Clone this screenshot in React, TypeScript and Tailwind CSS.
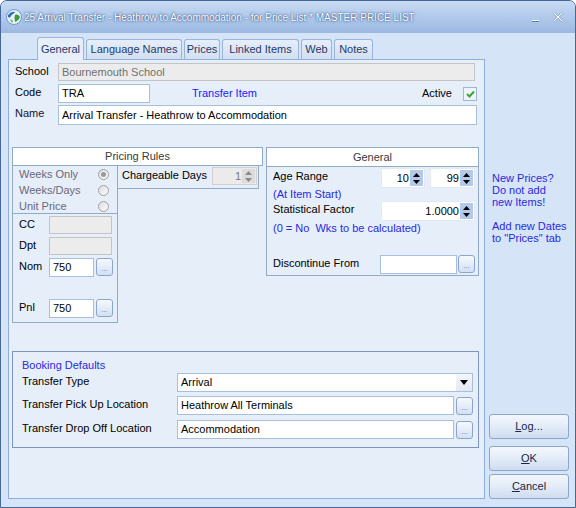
import React from 'react';

function Globe() {
  return (
    <svg width="16" height="16" viewBox="0 0 16 16">
      <circle cx="8" cy="8" r="7.5" fill="#e9f1fb" stroke="#5d86bf" strokeWidth="0.8" />
      <path d="M2 6 C4 3 7 2 9 3 C8 5 6 5 5 7 C4 9 3 9 2 8 Z" fill="#2f6fc0" />
      <path d="M9 6 C11 5 13 6 14 8 C13 11 11 12 9 13 C9 11 8 9 9 6 Z" fill="#3e9a3a" />
      <path d="M4 11 C5 10 7 11 7 13 C6 14 5 13 4 11 Z" fill="#7fb657" />
    </svg>
  );
}

function TextBox({ value = '', className = '', disabled = false }: { value?: string; className?: string; disabled?: boolean }) {
  return (
    <div
      className={`flex items-center px-[3px] border whitespace-nowrap overflow-hidden ${
        disabled ? 'bg-[#ececec] border-[#c4c4c4] text-[#707070]' : 'bg-white border-[#a7bedc] text-black'
      } ${className}`}
    >
      {value}
    </div>
  );
}

function Dots({ className = '' }: { className?: string }) {
  return (
    <div
      className={`flex items-end justify-center pb-[3px] rounded-[3px] border border-[#8aa6cf] bg-gradient-to-b from-[#f6f9fd] to-[#d2e0f2] text-[#3d6cc0] text-[7px] leading-none ${className}`}
    >
      ...
    </div>
  );
}

function SpinArrows({ disabled = false }: { disabled?: boolean }) {
  const c = disabled ? '#8a8a8a' : '#000';
  return (
    <div
      className={`w-[13px] h-full flex flex-col items-center justify-center gap-[3px] ${
        disabled ? 'bg-[#dcdcdc]' : 'bg-[#b3c9e8]'
      }`}
    >
      <svg width="7" height="4" viewBox="0 0 7 4">
        <path d="M0 4 L3.5 0 L7 4 Z" fill={c} />
      </svg>
      <svg width="7" height="4" viewBox="0 0 7 4">
        <path d="M0 0 L3.5 4 L7 0 Z" fill={c} />
      </svg>
    </div>
  );
}

function Spinner({ value, className = '', disabled = false }: { value: string; className?: string; disabled?: boolean }) {
  return (
    <div
      className={`flex items-stretch border ${
        disabled ? 'bg-[#ebebeb] border-[#d0d0d0] text-[#777]' : 'bg-white border-[#e2e9f3] text-black'
      } ${className}`}
    >
      <div className="flex-1 flex items-center justify-end pr-[1px]">{value}</div>
      <div className="py-[1px] pr-[1px]">
        <SpinArrows disabled={disabled} />
      </div>
    </div>
  );
}

function Radio({ checked = false }: { checked?: boolean }) {
  return (
    <div className="w-[11px] h-[11px] rounded-full border border-[#a0a0a0] bg-gradient-to-br from-[#e0e0e0] to-[#fafafa] flex items-center justify-center">
      {checked && <div className="w-[5px] h-[5px] rounded-full bg-[#9a9a9a]" />}
    </div>
  );
}

function Label({ children, className = '' }: { children: React.ReactNode; className?: string }) {
  return <div className={`self-start mt-[2px] leading-[13px] whitespace-nowrap ${className}`}>{children}</div>;
}

function WinButton({ children }: { children: React.ReactNode }) {
  return (
    <div className="w-[80px] h-[25px] flex items-center justify-center rounded-[3px] border border-[#8da6cb] bg-gradient-to-b from-[#f3f7fc] via-[#e3ecf8] to-[#cfdcef] text-[#15284a]">
      {children}
    </div>
  );
}

const tabs = [
  { name: 'General', w: 'w-[47px]' },
  { name: 'Language Names', w: 'w-[96px]' },
  { name: 'Prices', w: 'w-[36px]' },
  { name: 'Linked Items', w: 'w-[77px]' },
  { name: 'Web', w: 'w-[31px]' },
  { name: 'Notes', w: 'w-[39px]' },
];

export default function App() {
  return (
    <div className="w-[576px] h-[508px] flex flex-col bg-[#d5e4f7] border border-[#46679a] rounded-t-[7px] overflow-hidden font-['Liberation_Sans',Arial,sans-serif] text-[11px] text-black">
      {/* title bar */}
      <div className="h-[32px] shrink-0 flex items-center bg-gradient-to-b from-[#c9dbf2] via-[#b1c9eb] to-[#9cb9e2] pl-[5px] pr-[12px]">
        <Globe />
        <span className="ml-[2px] text-[10px] text-white [text-shadow:0_0_3px_#2c4f86,0_0_1px_#2c4f86] whitespace-nowrap">
          25 Arrival Transfer - Heathrow to Accommodation - for Price List * MASTER PRICE LIST
        </span>
        <div className="flex-1" />
        <div className="mt-[8px] w-[7px] h-[2px] bg-white border-b border-[#5a7cae]" />
        <svg className="ml-[14px]" width="10" height="10" viewBox="0 0 10 10">
          <path d="M1 1 L9 9 M9 1 L1 9" stroke="#5a7cae" strokeWidth="2.2" />
          <path d="M1 1 L9 9 M9 1 L1 9" stroke="#ffffff" strokeWidth="1.2" />
        </svg>
      </div>

      <div className="flex-1 flex">
        {/* left: tabs + page */}
        <div className="w-[477px] ml-[7px] flex flex-col">
          <div className="mt-[4px] h-[22px] flex items-end pl-[29px] gap-[2px]">
            {tabs.map((t, i) =>
              i === 0 ? (
                <div
                  key={t.name}
                  className={`${t.w} h-[23px] -mb-px relative z-10 flex items-center justify-center rounded-t-[3px] border border-b-0 border-[#9ab5da] bg-[#e5eef9] text-[#1f3a68]`}
                >
                  {t.name}
                </div>
              ) : (
                <div
                  key={t.name}
                  className={`${t.w} h-[20px] flex items-center justify-center rounded-t-[3px] border border-b-0 border-[#9ab5da] bg-gradient-to-b from-[#e6eef9] to-[#d3e0f1] text-[#1f3a68] whitespace-nowrap`}
                >
                  {t.name}
                </div>
              )
            )}
          </div>

          <div className="h-[440px] border border-[#8eaedb] bg-[#e5eef9] pl-[3px]">
            {/* School */}
            <div className="mt-[3px] pl-[3px] h-[18px] flex items-center">
              <Label className="w-[43px]">School</Label>
              <TextBox disabled value="Bournemouth School" className="w-[417px] h-[18px]" />
            </div>
            {/* Code */}
            <div className="mt-[3px] pl-[3px] pr-[7px] h-[19px] flex items-center">
              <Label className="w-[43px]">Code</Label>
              <TextBox value="TRA" className="w-[92px] h-[19px]" />
              <span className="ml-[42px] text-[#1a1aff]">Transfer Item</span>
              <div className="flex-1" />
              <span>Active</span>
              <div className="ml-[11px] w-[14px] h-[14px] border border-[#9fb6d6] bg-[#eef3fa] flex items-center justify-center">
                <svg width="9" height="8" viewBox="0 0 9 8">
                  <path d="M1 4 L3.5 6.5 L8 1.5" stroke="#3aa53a" strokeWidth="2" fill="none" />
                </svg>
              </div>
            </div>
            {/* Name */}
            <div className="mt-[2px] pl-[3px] h-[20px] flex items-center">
              <Label className="w-[43px] text-[#1c1030]">Name</Label>
              <TextBox value="Arrival Transfer - Heathrow to Accommodation" className="w-[419px] h-[20px]" />
            </div>

            {/* middle */}
            <div className="mt-[22px] flex items-start">
              {/* Pricing rules */}
              <div className="w-[251px] flex flex-col">
                <div className="h-[19px] border border-[#93a9c8] bg-white flex items-center justify-center text-[#3a3a3a]">
                  Pricing Rules
                </div>
                <div className="flex items-start">
                  <div className="w-[106px] flex flex-col">
                    <div className="h-[47px] border-x border-[#93a9c8] text-[#6b6878]">
                      {['Weeks Only', 'Weeks/Days', 'Unit Price'].map((r, i) => (
                        <div key={r} className="h-[16px] flex items-center pl-[6px] pr-[8px]">
                          <span className="flex-1">{r}</span>
                          <Radio checked={i === 0} />
                        </div>
                      ))}
                    </div>
                    <div className="h-[110px] border border-[#93a9c8] pl-[6px] pt-[2px]">
                      <div className="h-[18px] flex items-center">
                        <Label className="w-[30px] mt-[1px]">CC</Label>
                        <TextBox disabled className="w-[63px] h-[18px]" />
                      </div>
                      <div className="mt-[3px] h-[18px] flex items-center">
                        <Label className="w-[30px] mt-[1px]">Dpt</Label>
                        <TextBox disabled className="w-[63px] h-[18px]" />
                      </div>
                      <div className="mt-[3px] h-[19px] flex items-center">
                        <Label className="w-[30px] mt-[1px]">Nom</Label>
                        <TextBox value="750" className="w-[45px] h-[19px]" />
                        <Dots className="ml-[2px] w-[17px] h-[18px] self-start" />
                      </div>
                      <div className="mt-[22px] h-[19px] flex items-center">
                        <Label className="w-[30px] mt-[1px]">Pnl</Label>
                        <TextBox value="750" className="w-[45px] h-[19px]" />
                        <Dots className="ml-[2px] w-[17px] h-[18px] self-start" />
                      </div>
                    </div>
                  </div>
                  <div className="w-[141px] h-[23px] border-r border-b border-[#93a9c8] flex items-start pl-[4px] pr-[1px]">
                    <Label className="mt-[3px]">Chargeable Days</Label>
                    <div className="flex-1" />
                    <Spinner disabled value="1" className="mt-[1px] w-[45px] h-[18px]" />
                  </div>
                </div>
              </div>

              {/* General */}
              <div className="ml-[3px] w-[213px] h-[129px] border border-[#93a9c8] flex flex-col">
                <div className="h-[19px] border-b border-[#93a9c8] bg-white flex items-center justify-center text-[#3a3a3a]">
                  General
                </div>
                <div className="pl-[6px] pr-[3px]">
                  <div className="mt-[1px] h-[20px] flex items-start">
                    <Label>Age Range</Label>
                    <div className="flex-1" />
                    <Spinner value="10" className="w-[44px] h-[20px]" />
                    <Spinner value="99" className="ml-[5px] w-[45px] h-[20px]" />
                  </div>
                  <div className="h-[13px] leading-[13px] text-[#2a2ae0]">(At Item Start)</div>
                  <div className="h-[20px] flex items-start">
                    <Label>Statistical Factor</Label>
                    <div className="flex-1" />
                    <Spinner value="1.0000" className="w-[94px] h-[20px]" />
                  </div>
                  <div className="mt-[1px] h-[13px] leading-[13px] text-[#2a2ae0] whitespace-pre">(0 = No  Wks to be calculated)</div>
                  <div className="mt-[20px] h-[19px] flex items-start">
                    <Label className="mt-[1px]">Discontinue From</Label>
                    <div className="flex-1" />
                    <TextBox className="w-[77px] h-[19px]" />
                    <Dots className="ml-[1px] w-[17px] h-[18px]" />
                  </div>
                </div>
              </div>
            </div>

            {/* Booking defaults */}
            <div className="mt-[28px] w-[467px] h-[97px] border border-[#7d95bf] pl-[9px]">
              <div className="mt-[7px] leading-[13px] text-[#2a2ae0]">Booking Defaults</div>
              <div className="mt-[1px] h-[19px] flex items-start">
                <Label className="w-[155px] mt-[1px]">Transfer Type</Label>
                <div className="w-[296px] h-[19px] border border-[#a7bedc] bg-white flex items-stretch">
                  <div className="flex-1 flex items-center px-[3px]">Arrival</div>
                  <div className="w-[16px] bg-gradient-to-b from-[#f4f7fb] to-[#e3e9f2] flex items-center justify-center">
                    <svg width="8" height="5" viewBox="0 0 8 5">
                      <path d="M0 0 L4 5 L8 0 Z" fill="#000" />
                    </svg>
                  </div>
                </div>
              </div>
              <div className="mt-[4px] h-[19px] flex items-start">
                <Label className="w-[155px] mt-[1px]">Transfer Pick Up Location</Label>
                <TextBox value="Heathrow All Terminals" className="w-[277px] h-[19px]" />
                <Dots className="ml-[2px] mt-[1px] w-[17px] h-[18px]" />
              </div>
              <div className="mt-[5px] h-[19px] flex items-start">
                <Label className="w-[155px] mt-[1px]">Transfer Drop Off Location</Label>
                <TextBox value="Accommodation" className="w-[277px] h-[19px]" />
                <Dots className="ml-[2px] mt-[1px] w-[17px] h-[18px]" />
              </div>
            </div>
          </div>
        </div>

        {/* right column */}
        <div className="flex-1 flex flex-col pl-[4px] pb-[8px]">
          <div className="mt-[139px] pl-[3px] leading-[12px] text-[#2a2ae0]">
            <div>New Prices?</div>
            <div>Do not add</div>
            <div>new Items!</div>
            <div className="h-[12px]" />
            <div>Add new Dates</div>
            <div>to "Prices" tab</div>
          </div>
          <div className="flex-1" />
          <WinButton>
            <span><span className="underline">L</span>og...</span>
          </WinButton>
          <div className="mt-[7px]">
            <WinButton>
              <span><span className="underline">O</span>K</span>
            </WinButton>
          </div>
          <div className="mt-[3px]">
            <WinButton>
              <span><span className="underline">C</span>ancel</span>
            </WinButton>
          </div>
        </div>
      </div>
    </div>
  );
}
